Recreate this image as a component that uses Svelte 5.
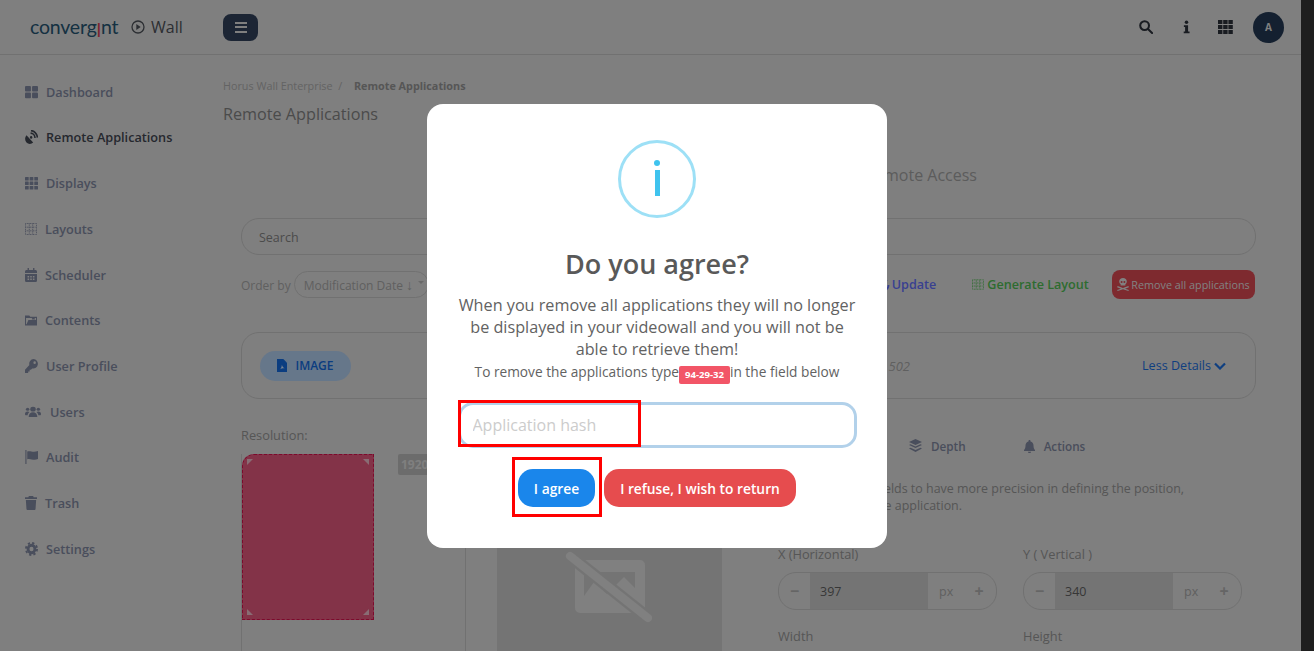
<script>
	const menu = [
		{ label: "Dashboard", icon: "dash", w: 13, gap: 8 },
		{ label: "Remote Applications", icon: "dish", w: 13, gap: 8, active: true },
		{ label: "Displays", icon: "grid", w: 13, gap: 8 },
		{ label: "Layouts", icon: "layout", w: 12, gap: 8 },
		{ label: "Scheduler", icon: "cal", w: 12, gap: 8 },
		{ label: "Contents", icon: "folder", w: 12, gap: 8 },
		{ label: "User Profile", icon: "key", w: 13, gap: 8 },
		{ label: "Users", icon: "users", w: 16, gap: 9 },
		{ label: "Audit", icon: "flag", w: 13, gap: 8 },
		{ label: "Trash", icon: "trash", w: 12, gap: 8 },
		{ label: "Settings", icon: "cog", w: 13, gap: 8 }
	];
</script>

{#snippet icon(name, w)}
	<svg class="ico" width={w} height="14" viewBox="0 0 14 14" fill="currentColor" preserveAspectRatio="none">
		{#if name === "dash"}
			<rect x="0" y="1" width="6.4" height="5.6" rx="1" /><rect x="7.6" y="1" width="6.4" height="5.6" rx="1" />
			<rect x="0" y="7.6" width="6.4" height="5.6" rx="1" /><rect x="7.6" y="7.6" width="6.4" height="5.6" rx="1" />
		{:else if name === "dish"}
			<path d="M1.6 5.2 L8.8 12.4 A5 5 0 0 1 1.6 5.2Z" />
			<path d="M6 3.2 A5 5 0 0 1 10.8 8 M6.4 .6 A7.6 7.6 0 0 1 13.4 7.6" fill="none" stroke="currentColor" stroke-width="1.7" />
			<circle cx="6.6" cy="7.4" r="1.3" />
		{:else if name === "grid"}
			{#each [1, 5.5, 10] as y}
				{#each [0, 5, 10] as x}
					<rect {x} {y} width="4" height="3.6" rx=".5" />
				{/each}
			{/each}
		{:else if name === "layout"}
			<path d="M.5 1.5h13v11H.5zM.5 5.2h13M.5 8.8h13M5 1.5v11M9 1.5v11" fill="none" stroke="currentColor" stroke-dasharray="1 .8" />
		{:else if name === "cal"}
			<path d="M3 0h1.6v2H9.400V0H11v2h1.500A1.500 1.500 0 0 1 14 3.500V5H0V3.500A1.500 1.500 0 0 1 1.500 2H3z" />
			<path fill-rule="evenodd" d="M0 6h14v6.500a1.500 1.500 0 0 1-1.500 1.500h-11A1.500 1.500 0 0 1 0 12.500zM3 8v1.500h1.800V8zM6.100 8v1.500h1.800V8zM9.200 8v1.500H11V8zM3 10.500V12h1.800v-1.500zM6.100 10.500V12h1.800v-1.500zM9.200 10.500V12H11v-1.500z" />
		{:else if name === "folder"}
			<path fill-rule="evenodd" d="M0 2.500h5l1.200 1.300H14V12.500H0zM1.200 5v6.300h.6L4 7h8.800V5z" />
			<path d="M8 5.500l2.500-1.500 1.500 2.500H8z" />
		{:else if name === "key"}
			<path fill-rule="evenodd" d="M9.200 0a4.800 4.800 0 1 1-1.500 9.400L6.400 10.800H5v1.600H3.400V14H0v-3.200l4.700-4.700A4.800 4.800 0 0 1 9.200 0zm1.200 2.300a1.300 1.300 0 1 0 0 2.700 1.300 1.300 0 0 0 0-2.700z" />
		{:else if name === "users"}
			<circle cx="2.300" cy="4.300" r="1.500" /><circle cx="11.700" cy="4.300" r="1.500" /><circle cx="7" cy="4.200" r="2.400" />
			<path d="M3.200 12c0-3 1.600-4.800 3.800-4.800s3.800 1.800 3.800 4.800zM0 9c0-1.500.8-2.600 2.200-2.600.7 0 1.300.3 1.700.7C3 8 2.500 9 2.300 10.300H.8C.3 10.300 0 9.800 0 9zM14 9c0-1.500-.8-2.600-2.200-2.600-.7 0-1.300.3-1.700.7 .9.9 1.400 1.900 1.600 3.200h1.500c.5 0 .8-.5.8-1.300z" />
		{:else if name === "flag"}
			<path d="M.4 0h1.200v14H.4zM2.400 1.500C6 .2 8 3 14 1v8C9 11 6 8 2.400 9.200z" />
		{:else if name === "trash"}
			<path d="M4.500 0h5l.6 1.200H14v1.800H0V1.200h3.900zM1 4h12l-.7 9a1.100 1.100 0 0 1-1.100 1H2.800a1.100 1.100 0 0 1-1.100-1z" />
		{:else if name === "cog"}
			<circle cx="7" cy="7" r="3.700" fill="none" stroke="currentColor" stroke-width="3" />
			<circle cx="7" cy="7" r="6" fill="none" stroke="currentColor" stroke-width="2" stroke-dasharray="2.400 2.310" />
		{/if}
	</svg>
{/snippet}

<div class="screen">
	<div class="window">
		<header class="topbar">
			<div class="brand">converg<span class="logo-i">ı</span>nt</div>
			<svg class="play" width="14" height="14" viewBox="0 0 14 14">
				<circle cx="7" cy="7" r="6" fill="none" stroke="currentColor" stroke-width="1.300" />
				<path d="M5.300 4l4.400 3-4.400 3z" fill="currentColor" />
			</svg>
			<span class="wall">Wall</span>
			<button class="burger" aria-label="menu"><span></span><span></span><span></span></button>
			<div class="top-icons">
				<svg width="14" height="14" viewBox="0 0 15 15" fill="none" stroke="currentColor" stroke-width="2.200">
					<circle cx="6" cy="6" r="4.700" /><path d="M9.600 9.600l4.400 4.400" stroke-linecap="round" />
				</svg>
				<svg class="info-top" width="7" height="14" viewBox="0 0 8 15" fill="currentColor">
					<circle cx="4" cy="2.200" r="2" /><path d="M1 5.500h4.800v7H7.500v2H.8v-2h1.600V7.500H1z" />
				</svg>
				<svg class="grid-top" width="15" height="14" viewBox="0 0 15 14" fill="currentColor">
					{#each [0, 5, 10] as y}
						{#each [0, 5.200, 10.400] as x}
							<rect {x} {y} width="4.400" height="4" />
						{/each}
					{/each}
				</svg>
				<div class="avatar">A</div>
			</div>
		</header>

		<div class="body">
			<nav class="side">
				{#each menu as item}
					<div class="side-item" class:active={item.active} style="gap: {item.gap}px">
						{@render icon(item.icon, item.w)}
						<span>{item.label}</span>
					</div>
				{/each}
			</nav>

			<main class="main">
				<div class="crumbs">Horus Wall Enterprise &nbsp;/ <b>Remote Applications</b></div>
				<h1>Remote Applications</h1>

				<div class="panel">
					<div class="panel-title">Remote Access</div>
					<div class="search">Search</div>

					<div class="order-row">
						<span class="order-label">Order by</span>
						<div class="select">Modification Date <span class="arrow">↓</span><i class="caret"></i></div>
						<span class="link update">
							<svg width="14" height="14" viewBox="0 0 14 14" fill="none" stroke="currentColor" stroke-width="1.800">
								<path d="M1.500 7A5.500 5.500 0 0 1 11 3.200M12.500 7A5.500 5.500 0 0 1 3 10.800" />
							</svg>
							Update
						</span>
						<span class="link generate">
							<svg width="12" height="13" viewBox="0 0 14 14"><path d="M.5 1.500h13v11H.5zM.5 5.200h13M.5 8.800h13M5 1.500v11M9 1.500v11" fill="none" stroke="currentColor" stroke-dasharray="1 .8" /></svg>
							Generate Layout
						</span>
						<button class="remove-all">
							<svg width="12" height="13" viewBox="0 0 12 13" fill="currentColor">
								<path fill-rule="evenodd" d="M6 0c2.200 0 3.800 1.400 3.800 3.400 0 1.200-.6 2.100-1.400 2.700V7.500H3.600V6.100C2.800 5.500 2.200 4.600 2.200 3.400 2.200 1.400 3.800 0 6 0zM4.600 3a1 1 0 1 0 0 2 1 1 0 0 0 0-2zm2.800 0a1 1 0 1 0 0 2 1 1 0 0 0 0-2z" />
								<path d="M.6 8l5.400 2 5.400-2 .5 1.200L8 10.700l3.900 1.300-.5 1L6 11.300.6 13 .1 12 4 10.700.1 9.200z" />
							</svg>
							Remove all applications
						</button>
					</div>

					<div class="app-card">
						<span class="pill">
							<svg width="10" height="13" viewBox="0 0 10 13" fill="currentColor">
								<path d="M0 0h6.300L10 3.700V13H0z" /><path d="M2.300 10.800c1.500-.8 2.400-2.500 2.600-5 .5 2 1.300 3 2.800 3.500-1.800-.1-3.800.3-5.400 1.500z" fill="#cfe0f5" />
							</svg>
							IMAGE
						</span>
						<span class="res">502</span>
						<span class="less">
							Less Details
							<svg width="12" height="8" viewBox="0 0 12 8" fill="none" stroke="currentColor" stroke-width="2.200"><path d="M1 1.500l5 5 5-5" /></svg>
						</span>
					</div>

					<div class="columns">
						<div class="col-canvas">
							<div class="res-label">Resolution:</div>
							<div class="canvas">
								<div class="app-box">
									<i class="corner tl"></i><i class="corner tr"></i><i class="corner bl"></i><i class="corner br"></i>
								</div>
								<span class="res-badge">1920</span>
							</div>
						</div>
						<div class="col-preview">
							<div class="preview">
								<svg width="90" height="80" viewBox="0 0 90 80">
									<path fill-rule="evenodd" d="M18 16h60a5 5 0 0 1 5 5v43a5 5 0 0 1-5 5H18a5 5 0 0 1-5-5V21a5 5 0 0 1 5-5zM22 28v31h51V28z" fill="#d5d5d5" />
									<path d="M22 59V52L32 38 45 50 62 33 73 44V59z" fill="#d5d5d5" />
									<path d="M8 12l78 62" stroke="#c2c2c2" stroke-width="13" />
									<path d="M8 12l78 62" stroke="#d5d5d5" stroke-width="8" stroke-linecap="round" />
								</svg>
							</div>
						</div>
						<div class="col-fields">
							<div class="tabs">
								<span class="tab depth">
									<svg width="13" height="14" viewBox="0 0 13 14" fill="currentColor"><path d="M6.500 0l6.500 3-6.500 3L0 3zM0 6l1.500-.7 5 2.300 5-2.300L13 6 6.500 9zM0 9.500l1.500-.7 5 2.300 5-2.300 1.500.7-6.500 3.500z" /></svg>
									Depth
								</span>
								<span class="tab">
									<svg width="11" height="13" viewBox="0 0 11 13" fill="currentColor"><path d="M5.500 0c.6 0 1 .4 1 1v.4C8.500 2 9.500 3.500 9.500 5.500c0 2.500.6 3.500 1.500 4.500v1H0v-1c.9-1 1.500-2 1.500-4.500 0-2 1-3.500 3-4.100V1c0-.6.400-1 1-1zM4 11.700h3a1.500 1.500 0 0 1-3 0z" /></svg>
									Actions
								</span>
							</div>
							<p class="hint">Use the numeric fields to have more precision in defining the position,<br />size and area of the application.</p>
							<div class="fields">
								<div class="field">
									<label>X (Horizontal)</label>
									<div class="stepper"><span class="step">−</span><span class="val">397</span><span class="unit">px</span><span class="step plus">+</span></div>
								</div>
								<div class="field second">
									<label>Y ( Vertical )</label>
									<div class="stepper"><span class="step">−</span><span class="val">340</span><span class="unit">px</span><span class="step plus">+</span></div>
								</div>
								<div class="field"><label>Width</label></div>
								<div class="field second"><label>Height</label></div>
							</div>
						</div>
					</div>
				</div>
			</main>
		</div>

		<div class="backdrop">
			<div class="modal">
				<div class="swal-icon"><span class="dot"></span><span class="stem"></span></div>
				<h2>Do you agree?</h2>
				<p class="msg">When you remove all applications they will no longer be displayed in your videowall and you will not be able to retrieve them!</p>
				<p class="msg-small">To remove the applications type<span class="hash">94-29-32</span>in the field below</p>
				<input class="hash-input" placeholder="Application hash" />
				<div class="actions">
					<button class="agree">I agree</button>
					<button class="refuse">I refuse, I wish to return</button>
				</div>
				<div class="mark mark-input"></div>
				<div class="mark mark-btn"></div>
			</div>
		</div>
	</div>
	<div class="scrollbar"></div>
</div>

<style>
	:global(body) {
		margin: 0;
		font-family: "Open Sans", "Liberation Sans", sans-serif;
		overflow: hidden;
	}

	.screen {
		width: 1314px;
		height: 651px;
		display: flex;
		overflow: hidden;
	}

	.scrollbar {
		width: 13px;
		background: #1e1e1e;
	}

	.window {
		flex: 1;
		position: relative;
		background: #d4d4d4;
		overflow: hidden;
		color: #7b8299;
	}

	/* top bar */
	.topbar {
		height: 54px;
		border-bottom: 1px solid #bdbdbd;
		display: flex;
		align-items: center;
		padding-left: 30px;
	}

	.brand {
		width: 101px;
		font-family: "Lato", sans-serif;
		font-size: 19.500px;
		letter-spacing: -0.2px;
		color: #24526e;
		margin-top: -2px;
	}

	.logo-i {
		display: inline-block;
		color: #d04050;
		transform: scaleY(1.400);
	}

	.play {
		color: #4a4e55;
	}

	.wall {
		margin-left: 6px;
		font-size: 16px;
		color: #4a4e55;
		width: 72px;
	}

	.burger {
		width: 35px;
		height: 27px;
		border: 0;
		border-radius: 8px;
		background: #2f3f58;
		display: flex;
		flex-direction: column;
		align-items: center;
		justify-content: center;
		gap: 2.500px;
		padding: 0;
	}

	.burger span {
		width: 12px;
		height: 2px;
		background: #d4d4d4;
	}

	.top-icons {
		margin-left: auto;
		margin-right: 17px;
		display: flex;
		align-items: center;
		color: #2a2f38;
	}

	.info-top {
		margin-left: 30px;
	}

	.grid-top {
		margin-left: 28px;
	}

	.avatar {
		width: 31px;
		height: 31px;
		border-radius: 50%;
		background: #223650;
		color: #d4d4d4;
		font-size: 10px;
		font-weight: 700;
		display: flex;
		align-items: center;
		justify-content: center;
		margin-left: 20px;
	}

	/* sidebar */
	.body {
		display: flex;
	}

	.side {
		width: 198px;
		padding: 13.950px 0 0 25px;
		flex: none;
	}

	.side-item {
		height: 45.700px;
		display: flex;
		align-items: center;
		font-size: 12.700px;
		font-weight: 600;
		color: #7b8299;
	}

	.side-item.active {
		color: #3e434e;
	}

	.ico {
		flex: none;
	}

	/* page */
	.main {
		flex: 1;
		min-width: 0;
		padding-top: 23px;
	}

	.crumbs {
		font-size: 10.800px;
		line-height: 16px;
		color: #a6a6a6;
	}

	.crumbs b {
		margin-left: 9px;
		font-size: 10.800px;
		font-weight: 700;
		color: #8f8f8f;
	}

	h1 {
		margin: 9px 0 0;
		font-size: 16.200px;
		font-weight: 400;
		line-height: 22px;
		color: #7d7d7d;
	}

	.panel {
		padding: 0 45px 0 18px;
	}

	.panel-title {
		margin-top: 39px;
		padding-right: 279px;
		text-align: right;
		font-size: 16px;
		line-height: 22px;
		color: #9a9a9a;
	}

	.search {
		margin-top: 32px;
		height: 37px;
		box-sizing: border-box;
		border: 1px solid #bcbcbc;
		border-radius: 18px;
		padding-left: 17px;
		font-size: 12.500px;
		line-height: 37px;
		color: #7d7d7d;
	}

	.order-row {
		margin-top: 15px;
		height: 29px;
		display: flex;
		align-items: center;
		font-size: 12px;
		color: #a0a0a0;
	}

	.order-label {
		padding-top: 2px;
	}

	.select {
		margin-left: 3px;
		width: 135px;
		height: 27px;
		box-sizing: border-box;
		border: 1px solid #bcbcbc;
		border-radius: 14px;
		padding-left: 9px;
		line-height: 27px;
		position: relative;
		white-space: nowrap;
	}

	.arrow {
		font-family: "Liberation Sans", sans-serif;
		font-size: 14px;
		line-height: 1;
	}

	.caret {
		position: absolute;
		right: 4px;
		top: 9px;
		border: 3px solid transparent;
		border-top-color: #b0b0b0;
	}

	.link {
		font-size: 12.600px;
		font-weight: 600;
	}

	.update {
		margin-left: 447px;
		color: #5f6cf0;
		display: inline-flex;
		align-items: center;
		gap: 2px;
	}

	.generate {
		margin-left: 36px;
		color: #4db450;
		display: inline-flex;
		align-items: center;
		gap: 3px;
	}

	.remove-all {
		margin-left: auto;
		margin-right: 1px;
		width: 143px;
		height: 29px;
		border: 0;
		border-radius: 8px;
		background: #d2464f;
		color: #d8d8d8;
		font: 400 10.800px "Open Sans", sans-serif;
		white-space: nowrap;
		display: flex;
		align-items: center;
		justify-content: center;
		gap: 2px;
		padding: 0;
	}

	.app-card {
		margin-top: 33px;
		height: 67px;
		box-sizing: border-box;
		border: 1px solid #bcbcbc;
		border-radius: 18px;
		padding: 0 29px 0 18px;
		display: flex;
		align-items: center;
	}

	.pill {
		width: 91px;
		height: 30px;
		border-radius: 15px;
		background: #aac6e6;
		color: #1366d5;
		font-size: 12px;
		font-weight: 600;
		display: flex;
		align-items: center;
		justify-content: center;
		gap: 8px;
	}

	.res {
		margin-left: auto;
		font-style: italic;
		font-size: 13px;
		color: #a0a0a0;
	}

	.less {
		margin-left: 232px;
		font-size: 12.600px;
		color: #1a69d5;
		display: inline-flex;
		align-items: center;
		gap: 3px;
	}

	.columns {
		margin-top: 27px;
		display: flex;
	}

	.col-canvas {
		width: 225px;
		flex: none;
	}

	.res-label {
		font-size: 12.800px;
		line-height: 18px;
		color: #8f8f8f;
		margin-bottom: 10px;
	}

	.canvas {
		height: 197px;
		box-sizing: border-box;
		border: 1px solid #bcbcbc;
		border-bottom: 0;
		border-top: 0;
		position: relative;
	}

	.app-box {
		width: 132px;
		height: 166px;
		box-sizing: border-box;
		background: #da5579;
		border: 1px dashed #d0104a;
		border-top-left-radius: 12px;
		position: relative;
	}

	.corner {
		position: absolute;
		width: 6px;
		height: 6px;
		background: #e5b5c2;
	}

	.tl { left: 4px; top: 4px; clip-path: polygon(0 0, 100% 0, 0 100%); }
	.tr { right: 4px; top: 4px; clip-path: polygon(0 0, 100% 0, 100% 100%); }
	.bl { left: 4px; bottom: 4px; clip-path: polygon(0 0, 100% 100%, 0 100%); }
	.br { right: 4px; bottom: 4px; clip-path: polygon(100% 0, 100% 100%, 0 100%); }

	.res-badge {
		position: absolute;
		left: 156px;
		top: 0;
		width: 40px;
		height: 21px;
		background: #b4b4b4;
		border-radius: 2px 0 0 2px;
		color: #d4d4d4;
		font-size: 12px;
		font-weight: 700;
		line-height: 21px;
		padding-left: 3px;
	}

	.col-preview {
		width: 225px;
		margin-left: 31px;
		flex: none;
		padding-top: 28px;
	}

	.preview {
		height: 197px;
		background: #c2c2c2;
		box-sizing: border-box;
		padding: 90px 0 0 65px;
	}

	.preview svg {
		display: block;
	}

	.col-fields {
		margin-left: 56px;
		flex: 1;
		min-width: 0;
		padding-top: 10px;
	}

	.tabs {
		height: 20px;
		padding-left: 131px;
		display: flex;
		align-items: center;
		gap: 58px;
	}

	.tab {
		display: inline-flex;
		align-items: center;
		gap: 9px;
		font-size: 11.700px;
		font-weight: 600;
		color: #7b8299;
	}

	.hint {
		margin: 24px 0 0;
		font-size: 12.450px;
		line-height: 17px;
		color: #8f8f8f;
		white-space: nowrap;
	}

	.fields {
		display: grid;
		grid-template-columns: 219px 219px;
		column-gap: 26px;
		margin-top: 31px;
	}

	.field label {
		display: block;
		font-size: 12.800px;
		line-height: 19px;
		color: #8f8f8f;
		margin-bottom: 8px;
	}

	.stepper {
		height: 38px;
		box-sizing: border-box;
		border: 1px solid #bcbcbc;
		border-radius: 18px;
		overflow: hidden;
		margin-bottom: 17px;
		display: flex;
		align-items: center;
		font-size: 12.500px;
		color: #a0a0a0;
	}

	.step {
		width: 31px;
		text-align: center;
		font-size: 16px;
		font-weight: 700;
		color: #a8a8a8;
		flex: none;
	}

	.val {
		width: 118px;
		height: 100%;
		background: #c2c2c2;
		box-sizing: border-box;
		padding-left: 10px;
		line-height: 38px;
		color: #5c5c5c;
		flex: none;
	}

	.unit {
		margin-left: 11px;
	}

	.plus {
		margin-left: auto;
		width: 34px;
	}

	/* modal */
	.backdrop {
		position: absolute;
		inset: 0;
		background: rgba(0, 0, 0, 0.4);
	}

	.modal {
		position: absolute;
		left: 427px;
		top: 104px;
		width: 460px;
		height: 444px;
		box-sizing: border-box;
		background: #fff;
		border-radius: 16px;
		padding-top: 36px;
		display: flex;
		flex-direction: column;
		align-items: center;
		color: #545454;
	}

	.swal-icon {
		width: 78px;
		height: 78px;
		box-sizing: border-box;
		border: 3px solid #9de0f6;
		border-radius: 50%;
		display: flex;
		flex-direction: column;
		align-items: center;
		padding-top: 17px;
		flex: none;
	}

	.dot {
		width: 6px;
		height: 6px;
		border-radius: 50%;
		background: #3fc3ee;
	}

	.stem {
		width: 5px;
		height: 26px;
		margin-top: 4px;
		background: #3fc3ee;
	}

	h2 {
		margin: 27px 0 0;
		font-size: 27px;
		font-weight: 600;
		line-height: 38px;
		color: #595959;
	}

	.msg {
		margin: 11px 0 0;
		width: 405px;
		font-size: 16.200px;
		line-height: 22px;
		text-align: center;
		color: #626262;
	}

	.msg-small {
		margin: 2px 0 0;
		height: 20px;
		font-size: 13.700px;
		line-height: 20px;
		display: flex;
		align-items: center;
		white-space: nowrap;
		color: #626262;
	}

	.hash {
		width: 51px;
		height: 18px;
		align-self: flex-start;
		margin-top: 4px;
		background: #f25567;
		border-radius: 2px;
		color: #fff;
		font-size: 9.600px;
		font-weight: 700;
		line-height: 18px;
		text-align: center;
	}

	.hash-input {
		margin-top: 20px;
		width: 399px;
		height: 46px;
		box-sizing: border-box;
		border: 3px solid #b2d1ea;
		border-radius: 15px;
		padding: 0 10px 0 12px;
		font: 400 16px "Open Sans", sans-serif;
		outline: none;
		flex: none;
	}

	.hash-input::placeholder {
		color: #ccc;
	}

	.actions {
		margin-top: 21px;
		display: flex;
		gap: 9px;
	}

	.actions button {
		height: 38px;
		border: 0;
		border-radius: 15px;
		color: #fff;
		font: 600 13.800px "Open Sans", sans-serif;
		padding: 0;
	}

	.agree {
		width: 77px;
		background: #1a86eb;
	}

	.refuse {
		width: 192px;
		background: #e64c4e;
	}

	.mark {
		position: absolute;
		box-sizing: border-box;
		border: 3px solid #f00;
		pointer-events: none;
	}

	.mark-input {
		left: 31px;
		top: 296px;
		width: 183px;
		height: 47px;
	}

	.mark-btn {
		left: 85px;
		top: 353px;
		width: 90px;
		height: 60px;
	}
</style>
